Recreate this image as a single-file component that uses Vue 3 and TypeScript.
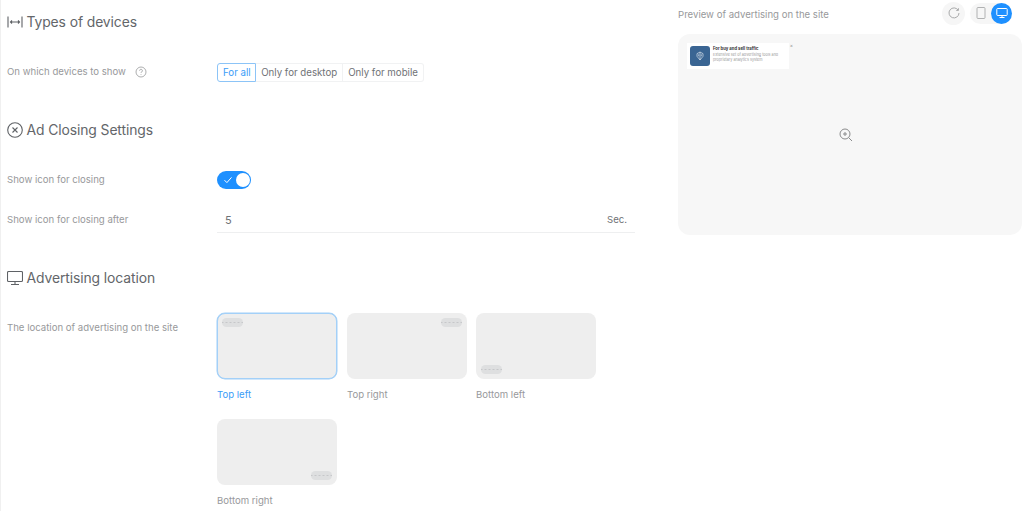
<script setup lang="ts">
interface Place { label: string; pos: string; active?: boolean }
const places: Place[] = [
  { label: 'Top left', pos: 'tl', active: true },
  { label: 'Top right', pos: 'tr' },
  { label: 'Bottom left', pos: 'bl' },
  { label: 'Bottom right', pos: 'br' },
]
</script>

<template>
  <div class="page">
    <main class="settings">
      <h2 class="heading first">
        <svg class="hicon" viewBox="0 0 16 16" fill="none" stroke="currentColor" stroke-width="1.1">
          <path d="M1 2.500v11M15 2.500v11M3.500 8h9M5 6.500 3.500 8 5 9.500M11 6.500 12.500 8 11 9.500" />
        </svg>
        Types of devices
      </h2>
      <div class="row devices">
        <span class="label">On which devices to show
          <svg class="help" viewBox="0 0 12 12" fill="none" stroke="currentColor" stroke-width=".8">
            <circle cx="6" cy="6" r="5" />
            <path d="M4.600 4.700a1.400 1.400 0 1 1 2.100 1.200c-.5.3-.7.5-.7 1.100M6 8.200v.7" />
          </svg>
        </span>
        <div class="segments">
          <span class="seg on">For all</span>
          <span class="seg">Only for desktop</span>
          <span class="seg">Only for mobile</span>
        </div>
      </div>

      <h2 class="heading closing">
        <svg class="hicon" viewBox="0 0 16 16" fill="none" stroke="currentColor" stroke-width="1.1">
          <circle cx="8" cy="8" r="7.300" />
          <path d="m5.500 5.500 5 5M10.500 5.500l-5 5" />
        </svg>
        Ad Closing Settings
      </h2>
      <div class="row toggle-row">
        <span class="label">Show icon for closing</span>
        <span class="toggle">
          <svg class="check" viewBox="0 0 10 10" fill="none" stroke="#fff" stroke-width="1">
            <path d="m1.500 5.200 2.400 2.400 4.600-5.200" />
          </svg>
          <span class="knob"></span>
        </span>
      </div>
      <div class="row input-row">
        <span class="label">Show icon for closing after</span>
        <div class="field">
          <span class="value">5</span>
          <span class="unit">Sec.</span>
        </div>
      </div>

      <h2 class="heading location">
        <svg class="hicon" viewBox="0 0 16 16" fill="none" stroke="currentColor" stroke-width="1.1">
          <rect x=".5" y="1.500" width="15" height="10" rx="1" />
          <path d="M8 11.500v3M4 14.500h8" />
        </svg>
        Advertising location
      </h2>
      <div class="row places-row">
        <span class="label">The location of advertising on the site</span>
        <div class="places">
          <div v-for="p in places" :key="p.pos" class="place" :class="{ active: p.active }">
            <div class="screen" :class="p.pos"><span class="chip"></span></div>
            <span class="cap">{{ p.label }}</span>
          </div>
        </div>
      </div>
    </main>

    <aside class="preview">
      <div class="ptop">
        <span class="ptitle">Preview of advertising on the site</span>
        <span class="round">
          <svg viewBox="0 0 12 12" fill="none" stroke="currentColor" stroke-width="1">
            <path d="M10.200 3.200A5 5 0 1 0 11 6M10.400 1.200v2.200H8.200" />
          </svg>
        </span>
        <span class="switch">
          <span class="sw">
            <svg viewBox="0 0 12 12" fill="none" stroke="currentColor" stroke-width=".9">
              <rect x="2" y=".5" width="8" height="11" rx="1" />
            </svg>
          </span>
          <span class="sw on">
            <svg viewBox="0 0 12 12" fill="none" stroke="currentColor" stroke-width="1">
              <rect x=".8" y="1.500" width="10.400" height="7" rx=".8" />
              <path d="M6 8.500v2M3.500 10.500h5" />
            </svg>
          </span>
        </span>
      </div>
      <div class="stage">
        <div class="ad">
          <span class="logo">
            <svg viewBox="0 0 12 14" fill="none" stroke="#dfe7ef" stroke-width="1">
              <path d="M6 1 10.500 3.500v4L6 13 1.500 7.500v-4zM6 1v12M4 4.500v3M8 4.500v3" />
            </svg>
          </span>
          <div class="adtext">
            <b>For buy and sell traffic</b>
            <span>Extensive set of advertising tools and<br />proprietary analytics system</span>
          </div>
          <span class="adx">×</span>
        </div>
        <svg class="zoom" viewBox="0 0 14 14" fill="none" stroke="currentColor" stroke-width="1">
          <circle cx="6" cy="6" r="5" />
          <path d="m9.700 9.700 3.300 3.300M4 6h4M6 4v4" />
        </svg>
      </div>
    </aside>
  </div>
</template>

<style>
html, body { margin: 0; background: #fff; }
</style>

<style scoped>
.page {
  width: 1024px;
  height: 511px;
  box-sizing: border-box;
  display: flex;
  gap: 43px;
  padding-left: 7px;
  overflow: hidden;
  font-family: Inter, "Liberation Sans", sans-serif;
  border-left: 1px solid #f0f0f0;
}
.settings { width: 628px; flex: none; margin-left: -1px; }
.heading {
  display: flex;
  align-items: center;
  gap: 3.500px;
  margin: 0;
  height: 20px;
  font-size: 13.900px;
  font-weight: 400;
  letter-spacing: -.1px;
  color: #63666a;
}
.first { margin-top: 12px; }
.closing { margin-top: 38px; }
.location { margin-top: 35px; }
.hicon { width: 16px; height: 16px; flex: none; color: #5f6266; }
.row { display: flex; }
.label {
  width: 210px;
  flex: none;
  font-size: 9.600px;
  line-height: 14px;
  color: #98999b;
  display: inline-flex;
  align-items: center;
}
.help { width: 12px; height: 12px; margin-left: 9px; color: #98999b; }
.devices { margin-top: 30px; align-items: center; height: 20px; }
.segments { display: flex; height: 19px; }
.seg {
  display: flex;
  align-items: center;
  padding: 0 5px;
  font-size: 9.700px;
  color: #6f7276;
  border: 1px solid #f1f2f3;
  border-left: none;
}
.seg:last-child { border-radius: 0 3px 3px 0; }
.seg.on {
  color: #3b9df8;
  padding: 0 4.500px 0 5px;
  border: 1px solid #8cc4f7;
  border-radius: 3px 0 0 3px;
}
.toggle-row { margin-top: 30px; align-items: center; height: 20px; }
.toggle {
  position: relative;
  width: 34px;
  height: 18px;
  border-radius: 9px;
  background: #1e90ff;
  display: block;
}
.check { position: absolute; left: 6px; top: 4px; width: 10px; height: 10px; }
.knob {
  position: absolute;
  right: 1px;
  top: 2px;
  width: 14px;
  height: 14px;
  border-radius: 50%;
  background: #fff;
}
.input-row { margin-top: 20px; align-items: flex-start; }
.input-row .label { height: 14px; margin-top: 3px; }
.field {
  flex: 1;
  display: flex;
  justify-content: space-between;
  height: 19px;
  padding: 3px 8px 0;
  border-bottom: 1px solid #eeeff0;
  font-size: 9.600px;
  line-height: 14px;
  color: #6f7276;
}
.value { font-size: 11px; }
.places-row { margin-top: 25px; }
.places-row .label { align-self: flex-start; height: 14px; margin-top: 8px; }
.places {
  display: grid;
  grid-template-columns: 130px 129px 120px;
  row-gap: 17px;
}
.place { display: flex; flex-direction: column; width: 120px; }
.screen {
  position: relative;
  box-sizing: border-box;
  height: 66px;
  border-radius: 8px;
  background: #eeeeee;
}
.active .screen { border: 1px solid #a3d0f8; box-shadow: 0 0 0 .5px #a3d0f8; }
.chip {
  position: absolute;
  width: 21px;
  height: 9px;
  border-radius: 5px;
  background-color: #dedfe0;
  background-image: radial-gradient(circle, #c6c7c9 .5px, transparent .8px);
  background-size: 4px 9px;
  background-position: 2.500px 0;
  background-repeat: repeat-x;
}
.tl .chip { left: 5px; top: 5px; }
.active.place .chip { left: 4px; top: 4px; }
.tr .chip { right: 5px; top: 5px; }
.bl .chip { left: 5px; bottom: 5px; }
.br .chip { right: 5px; bottom: 5px; }
.cap {
  font-size: 9.600px;
  line-height: 14px;
  margin-top: 9px;
  color: #98999b;
}
.active .cap { color: #3b9df8; }

.preview { width: 344px; flex: none; }
.ptop { display: flex; align-items: center; height: 24px; margin-top: 2px; }
.ptitle { flex: 1; font-size: 9.600px; color: #98999b; }
.round {
  width: 23px;
  height: 23px;
  border-radius: 50%;
  background: #f6f6f6;
  color: #a8a9aa;
  display: flex;
  align-items: center;
  justify-content: center;
  margin: -2px 5px 0 0;
}
.round svg { width: 12px; height: 12px; }
.switch {
  display: flex;
  height: 21px;
  border-radius: 11px;
  background: #f6f6f6;
  margin: -2px 10px 0 0;
}
.sw {
  width: 21px;
  height: 21px;
  border-radius: 50%;
  display: flex;
  align-items: center;
  justify-content: center;
  color: #a8a9aa;
}
.sw svg { width: 12px; height: 12px; }
.sw.on { background: #1e90ff; color: #fff; }
.stage {
  position: relative;
  margin-top: 8px;
  height: 201px;
  border-radius: 12px;
  background: #f7f7f7;
}
.ad {
  position: absolute;
  left: 9px;
  top: 9px;
  width: 102px;
  height: 26px;
  background: #fff;
  display: flex;
  gap: 3px;
  padding: 3px;
  box-sizing: border-box;
}
.logo {
  width: 20px;
  height: 20px;
  flex: none;
  border-radius: 3px;
  background: #3a6593;
  display: flex;
  align-items: center;
  justify-content: center;
}
.logo svg { width: 8px; height: 10px; }
.adtext { display: flex; flex-direction: column; font-size: 3.700px; line-height: 5px; color: #999; width: 72px; white-space: nowrap; }
.adtext b { color: #333; font-weight: 700; font-size: 4.200px; margin-bottom: 1px; }
.adx { position: absolute; right: -4px; top: 0; font-size: 5px; line-height: 5px; color: #999; }
.zoom {
  position: absolute;
  left: 161px;
  top: 94px;
  width: 14px;
  height: 14px;
  color: #8a8b8c;
}
</style>
